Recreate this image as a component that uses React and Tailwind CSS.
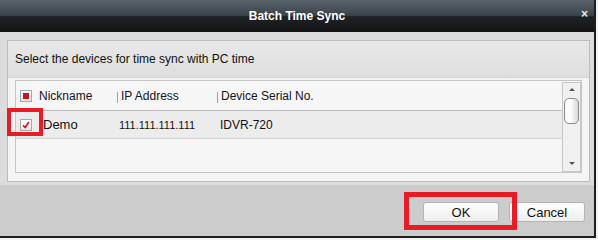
import React from "react";

const CheckMark = () => (
  <svg width="12" height="12" viewBox="0 0 12 12">
    <path d="M2.5 6.5 L5 9 L9.5 2.5" fill="none" stroke="#c8161e" strokeWidth="2" />
  </svg>
);

export default function App() {
  return (
    <div className="relative w-[598px] h-[240px] overflow-hidden bg-[#f4f4f4] font-['Liberation_Sans',Arial,sans-serif]">
      <div className="w-[596px] h-[238px] flex flex-col border-r-2 border-b-2 border-[#1e1e1e]">
        {/* title bar */}
        <div className="relative h-[32px] shrink-0 flex items-center justify-center bg-[linear-gradient(to_bottom,#59636c_0%,#3b434a_48%,#1f2226_52%,#141414_100%)]">
          <span className="text-[12px] font-bold text-white">Batch Time Sync</span>
          <span className="absolute right-[6px] top-[8px] text-[12px] font-bold leading-none text-[#e8e8e8]">×</span>
        </div>

        {/* device panel */}
        <div className="h-[153px] shrink-0 bg-[#dcdcdc] pt-[8px] pl-[7px] pr-[4px] pb-[3px]">
          <div className="h-full flex flex-col border border-[#bcbcbc]">
            <div className="h-[36px] shrink-0 flex items-center pl-[7px] bg-[linear-gradient(to_bottom,#e8e8e8,#dedede)] text-[12px] text-[#111]">
              Select the devices for time sync with PC time
            </div>
            <div className="flex-1 bg-[#f4f4f4] border-t border-[#d2d2d2] pt-[2px] pl-[7px] pr-[7px] pb-[8px]">
              <div className="h-full flex border border-[#c6c6c6] bg-[#f6f6f6]">
                <div className="flex-1 flex flex-col">
                  {/* header row */}
                  <div className="h-[29px] flex items-center text-[12px] text-[#141424]">
                    <div className="w-[101px] flex items-center pl-[4px]">
                      <div className="w-[12px] h-[12px] flex items-center justify-center border border-[#a8a8a8] bg-[linear-gradient(to_bottom,#ffffff,#e6e6e6)]">
                        <div className="w-[6px] h-[6px] bg-[#c8161e]" />
                      </div>
                      <span className="ml-[7px]">Nickname</span>
                    </div>
                    <div className="w-px h-[11px] mt-[3px] bg-[#a0a0a0]" />
                    <div className="w-[99px] pl-[3px]">IP Address</div>
                    <div className="w-px h-[11px] mt-[3px] bg-[#a0a0a0]" />
                    <div className="pl-[3px]">Device Serial No.</div>
                  </div>
                  {/* data row */}
                  <div className="h-[29px] flex items-center bg-[#ececec] border-t border-b border-t-[#bdbdbd] border-b-[#d2d2d2] text-[#111]">
                    <div className="w-[101px] flex items-center pl-[4px]">
                      <div className="w-[12px] h-[12px] flex items-center justify-center border border-[#a8a8a8] bg-[linear-gradient(to_bottom,#ffffff,#e6e6e6)]">
                        <CheckMark />
                      </div>
                      <span className="ml-[11px] text-[13px]">Demo</span>
                    </div>
                    <div className="w-px" />
                    <div className="w-[99px] pl-[1px] pt-[2px] text-[11px]">111.111.111.111</div>
                    <div className="w-px" />
                    <div className="pl-[2px] text-[12px]">IDVR-720</div>
                  </div>
                </div>
                {/* scrollbar */}
                <div className="w-[19px] mt-[1px] flex flex-col items-center border border-[#c8c8c8] bg-[#f0f0f0]">
                  <div className="mt-[5px] w-0 h-0 border-l-[3px] border-r-[3px] border-b-[3px] border-l-transparent border-r-transparent border-b-[#555]" />
                  <div className="mt-[7px] w-[15px] h-[26px] rounded-[5px] border border-[#8a8a8a] bg-[linear-gradient(to_right,#f8f8f8,#ffffff_40%,#d8d8d8)]" />
                  <div className="flex-1" />
                  <div className="mb-[6px] w-0 h-0 border-l-[3px] border-r-[3px] border-t-[3px] border-l-transparent border-r-transparent border-t-[#555]" />
                </div>
              </div>
            </div>
          </div>
        </div>

        {/* footer */}
        <div className="flex-1 bg-[#cccccc] flex justify-end items-start pt-[17px] pr-[9px] gap-[10px]">
          <button className="w-[76px] h-[20px] rounded-[3px] border border-[#b4b4b4] bg-[linear-gradient(to_bottom,#ffffff,#eeeeee)] text-[13px] text-[#111]">
            OK
          </button>
          <button className="w-[76px] h-[20px] rounded-[3px] border border-[#b4b4b4] bg-[linear-gradient(to_bottom,#ffffff,#eeeeee)] text-[13px] text-[#111]">
            Cancel
          </button>
        </div>
      </div>

      {/* red annotation boxes */}
      <div className="absolute left-[7px] top-[108px] w-[36px] h-[28px] border-4 border-[#e81c24]" />
      <div className="absolute left-[404px] top-[192px] w-[113px] h-[38px] border-[5px] border-[#e81c24]" />
    </div>
  );
}
